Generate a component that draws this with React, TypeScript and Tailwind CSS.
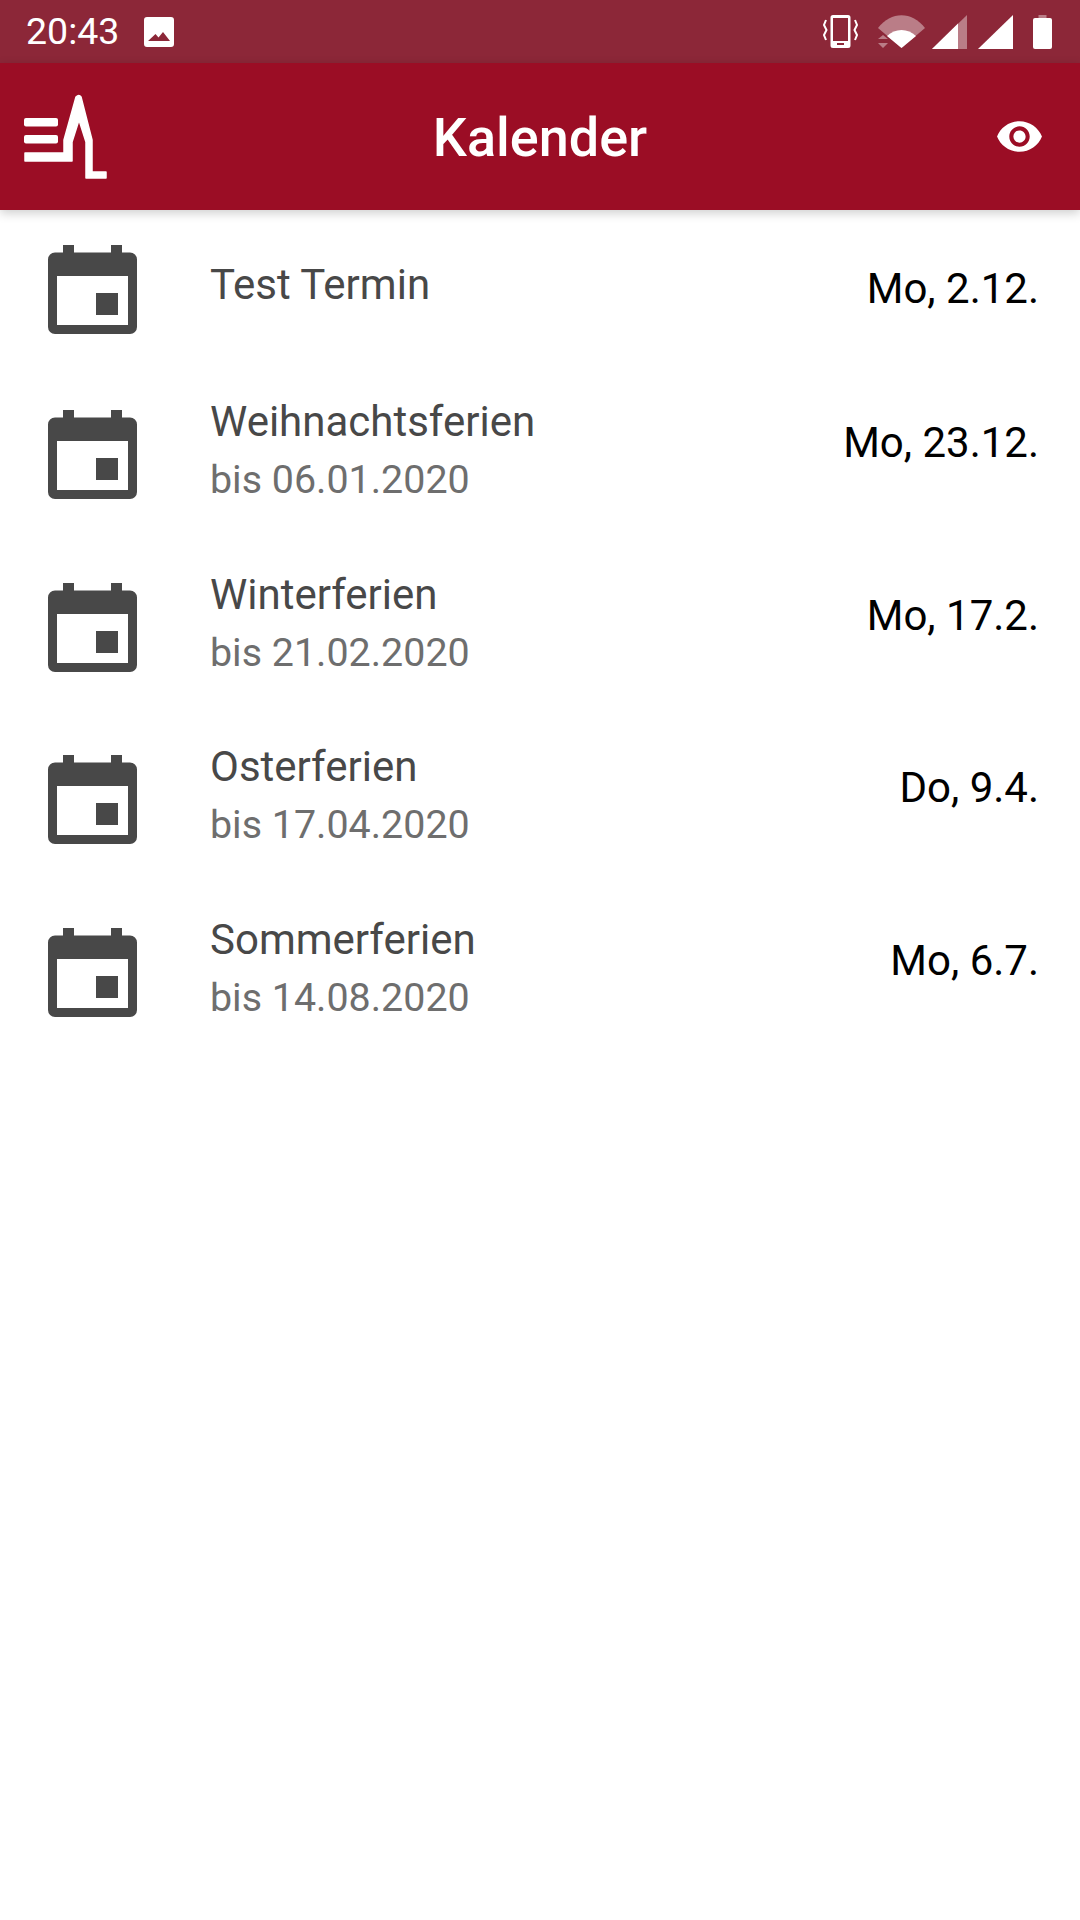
const EVENTS = [
  { title: "Test Termin", until: null, date: "Mo, 2.12." },
  { title: "Weihnachtsferien", until: "bis 06.01.2020", date: "Mo, 23.12." },
  { title: "Winterferien", until: "bis 21.02.2020", date: "Mo, 17.2." },
  { title: "Osterferien", until: "bis 17.04.2020", date: "Do, 9.4." },
  { title: "Sommerferien", until: "bis 14.08.2020", date: "Mo, 6.7." },
];

function CalendarIcon() {
  return (
    <svg width="89" height="89" viewBox="0 0 89 89" className="mt-[16px] shrink-0 text-[#484848]">
      <path
        fill="currentColor"
        fillRule="evenodd"
        d="M15 0h11v7.500h37V0h11v7.500h8a7 7 0 0 1 7 7V82a7 7 0 0 1-7 7H7a7 7 0 0 1-7-7V14.500a7 7 0 0 1 7-7h8zM9 31v49h71V31zM48 48h22v22H48z"
      />
    </svg>
  );
}

function AppLogo() {
  return (
    <svg width="84" height="86" viewBox="0 0 84 86" className="-ml-[6px] text-white">
      <g fill="currentColor">
        <rect x="0" y="24" width="34" height="8.500" rx="2" />
        <rect x="0" y="41" width="34" height="8.500" rx="2" />
        <path
          stroke="currentColor"
          strokeWidth="1.500"
          strokeLinejoin="round"
          d="M1 59h39V46L52 3q3-3 5 0l11 43v32h14v6H62V48l-7-22-7 22v19H1z"
        />
      </g>
    </svg>
  );
}

function EyeIcon() {
  return (
    <svg width="49" height="49" viewBox="0 0 24 24" className="text-white">
      <path
        fill="currentColor"
        d="M12 4.500C7 4.500 2.730 7.610 1 12c1.730 4.390 6 7.500 11 7.500s9.270-3.110 11-7.500c-1.730-4.390-6-7.500-11-7.500zM12 17c-2.760 0-5-2.240-5-5s2.240-5 5-5 5 2.240 5 5-2.240 5-5 5zm0-8c-1.660 0-3 1.340-3 3s1.340 3 3 3 3-1.340 3-3-1.340-3-3-3z"
      />
    </svg>
  );
}

function StatusBar() {
  return (
    <div className="flex h-[63px] items-center justify-between bg-[#8c2738] pl-[26px] pr-[28px] text-white">
      <div className="flex items-center gap-[25px]">
        <span className="text-[37.500px] leading-none">20:43</span>
        <svg width="30" height="30" viewBox="0 0 30 30">
          <path
            fill="currentColor"
            fillRule="evenodd"
            d="M3 0h24a3 3 0 0 1 3 3v24a3 3 0 0 1-3 3H3a3 3 0 0 1-3-3V3a3 3 0 0 1 3-3zM4 24h22l-7-9-4.500 5.500-3-3.500z"
          />
        </svg>
      </div>
      <div className="flex items-center">
        <svg width="35" height="33" viewBox="0 0 35 33">
          <path
            fill="currentColor"
            fillRule="evenodd"
            d="M10 0h15a2.500 2.500 0 0 1 2.500 2.500v28A2.500 2.500 0 0 1 25 33H10a2.500 2.500 0 0 1-2.500-2.500v-28A2.500 2.500 0 0 1 10 0zM10 3v23h15V3zM14 28v2h7v-2z"
          />
          <path
            d="M3 5 1 10l2.500 5L1 20l2 5M32 5l2 5-2.500 5 2.500 5-2 5"
            fill="none"
            stroke="currentColor"
            strokeWidth="2"
          />
        </svg>
        <svg width="47" height="33" viewBox="0 0 47 33" className="ml-[20px]">
          <path d="M0 13C13-4 34-4 47 13L23.500 33z" fill="currentColor" opacity=".4" />
          <path d="M9 21c8-8 21-8 29 0L23.500 33z" fill="currentColor" />
          <path d="M5 20l5 4H0zM5 33l5-5H0z" fill="currentColor" opacity=".4" />
        </svg>
        <svg width="35" height="34" viewBox="0 0 35 34" className="ml-[7px]">
          <path d="M35 0v34H0z" fill="currentColor" opacity=".4" />
          <path d="M26 8.500V34H0z" fill="currentColor" />
        </svg>
        <svg width="35" height="34" viewBox="0 0 35 34" className="ml-[11px]">
          <path d="M35 0v34H0z" fill="currentColor" />
        </svg>
        <svg width="19" height="34" viewBox="0 0 19 34" className="ml-[20px]">
          <path d="M5.500 0h8v3h-8z" fill="currentColor" opacity=".4" />
          <rect y="3" width="19" height="31" rx="2" fill="currentColor" />
        </svg>
      </div>
    </div>
  );
}

export default function App() {
  return (
    <div className="min-h-[1920px] bg-white font-['Roboto',sans-serif]">
      <StatusBar />
      <header className="relative grid h-[147px] grid-cols-[1fr_auto_1fr] items-center bg-[#9b0d25] px-[30px] shadow-[0_3px_10px_rgba(0,0,0,0.2)]">
        <AppLogo />
        <h1 className="pt-[2px] text-[54px] font-medium text-white">Kalender</h1>
        <div className="mr-[6px] justify-self-end">
          <EyeIcon />
        </div>
      </header>
      <ul className="pt-[19px]">
        {EVENTS.map((e) => (
          <li key={e.title} className={`flex pl-[48px] pr-[41px] ${e.until ? "h-[172.700px]" : "h-[165px]"}`}>
            <CalendarIcon />
            <div className={`ml-[73px] min-w-0 flex-1 ${e.until ? "" : "mt-[28px]"}`}>
              <div className="text-[42px] leading-[56px] text-[#484848]">{e.title}</div>
              {e.until && <div className="text-[39.400px] leading-[59px] text-[#6e6e6e]">{e.until}</div>}
            </div>
            <div className={`text-[42px] leading-[56px] text-black ${e.until ? "mt-[21px]" : "mt-[32px]"}`}>{e.date}</div>
          </li>
        ))}
      </ul>
    </div>
  );
}
